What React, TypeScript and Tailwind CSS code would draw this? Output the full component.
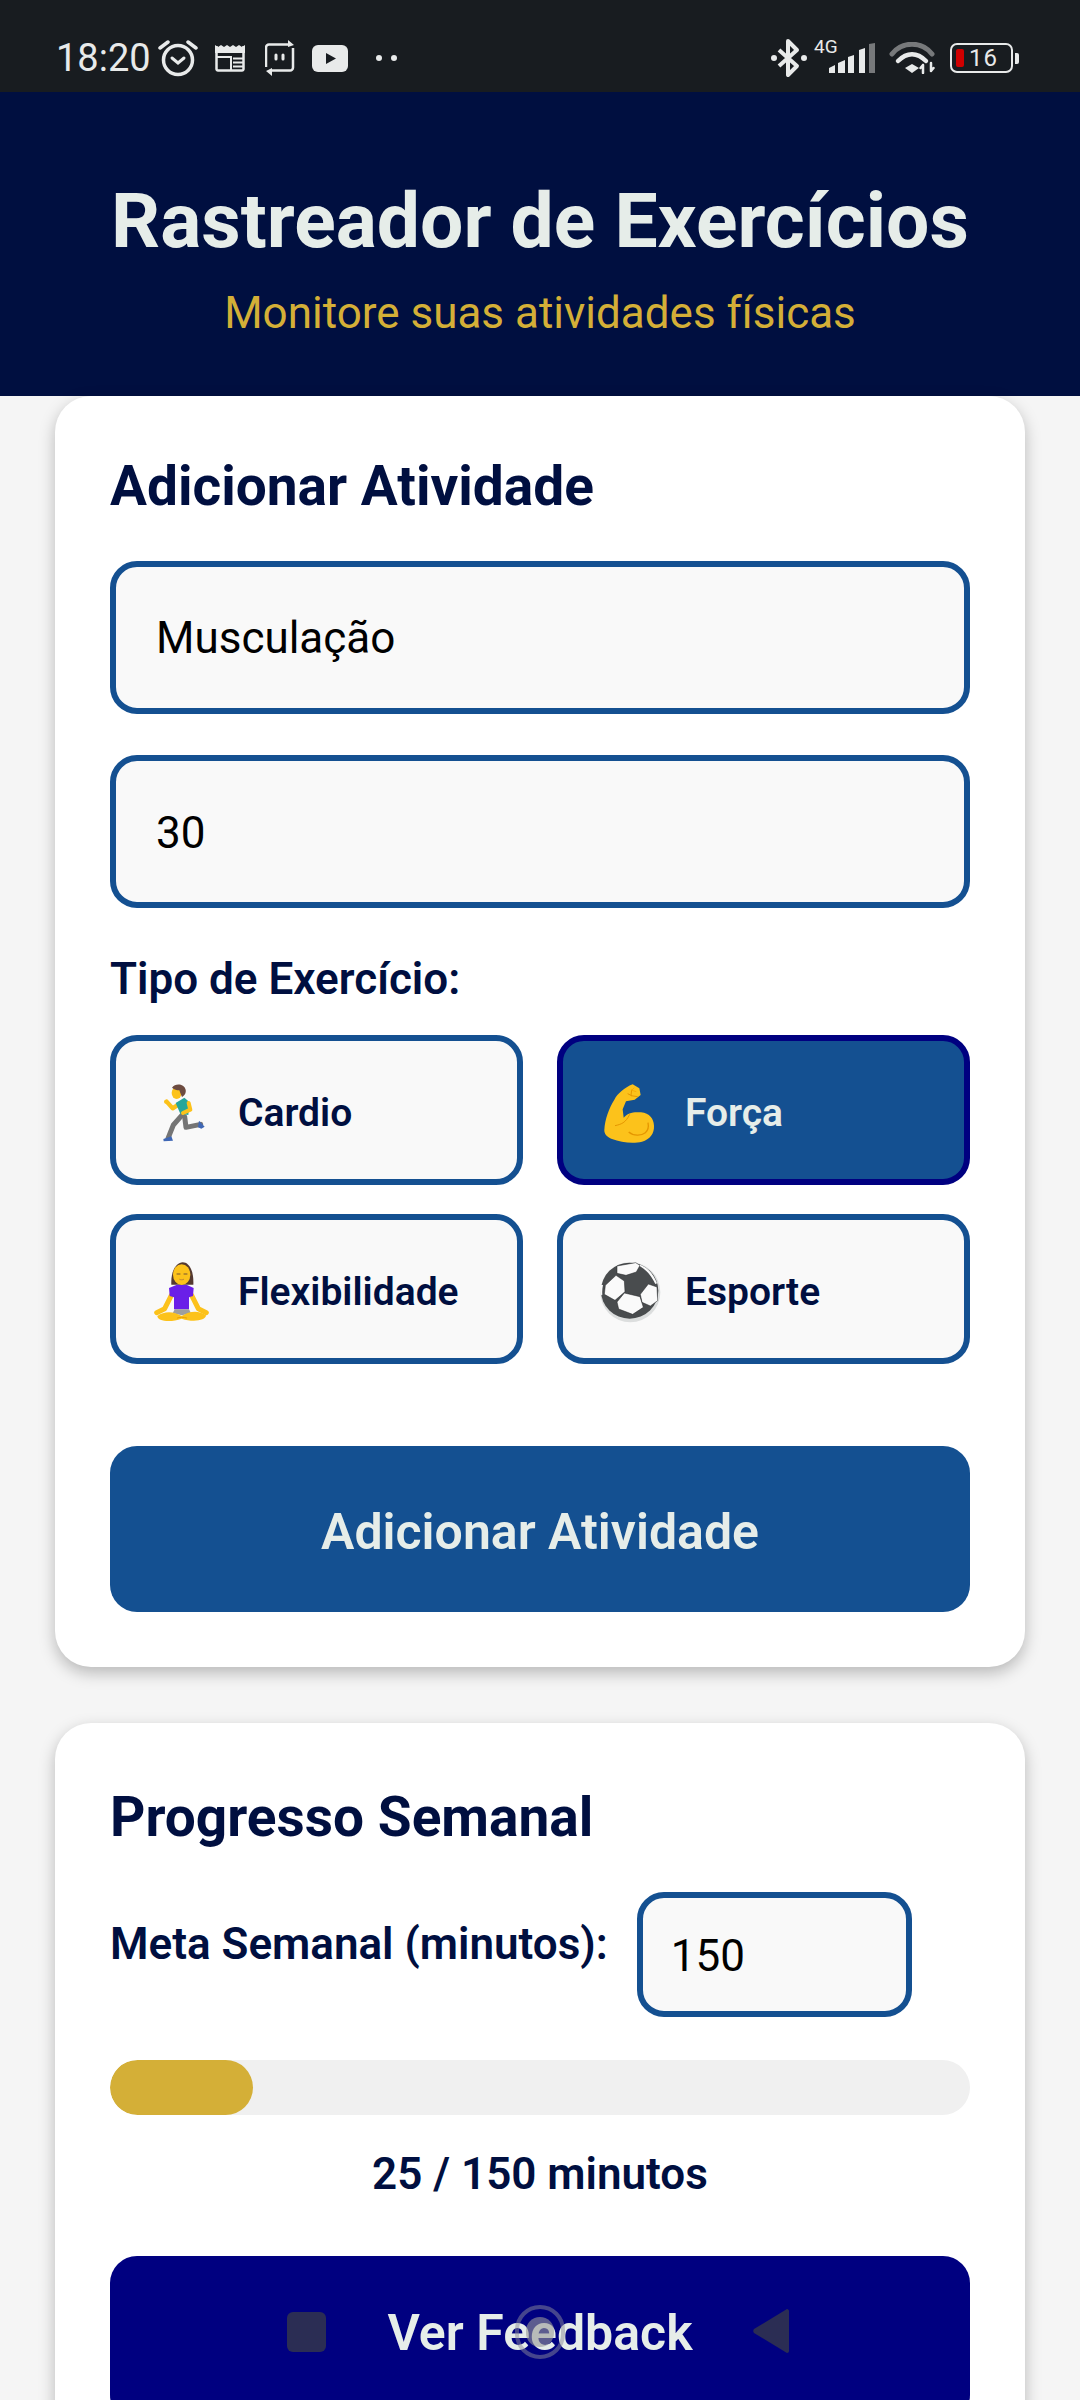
import React from 'react';

const FONT = 'font-["Roboto",sans-serif]';

const AlarmIcon = () => (
  <svg width="40" height="38" viewBox="0 0 40 38" fill="none" stroke="#e8eaea" strokeWidth="3.500">
    <circle cx="20" cy="21" r="14.500" />
    <path d="M14 19l6 5 6-5" strokeWidth="3" strokeLinecap="round" />
    <path d="M2 9l8-6M38 9l-8-6" strokeWidth="3.500" strokeLinecap="round" />
  </svg>
);

const NewsIcon = () => (
  <svg width="30" height="28" viewBox="0 0 30 28" fill="none" stroke="#e8eaea" strokeWidth="2.500">
    <path d="M1.500 2v23a1.500 1.500 0 0 0 1.500 1.500h24a1.500 1.500 0 0 0 1.500-1.500V2" />
    <path d="M0 1l3 2 3-2 3 2 3-2 3 2 3-2 3 2 3-2 3 2 3-2v8H0z" fill="#e8eaea" stroke="none" />
    <path d="M2 13h15M16 13v13" strokeWidth="2" />
    <path d="M18 14.500h10M18 18.500h10M18 22.500h10" strokeWidth="1.800" />
  </svg>
);

const BotIcon = () => (
  <svg width="30" height="38" viewBox="0 0 30 38" fill="none" stroke="#e8eaea" strokeWidth="2.500">
    <path d="M25 5.500H4a3 3 0 0 0-3 3V28" />
    <path d="M5 31.500h20a3 3 0 0 0 3-3V9" />
    <path d="M23 1l6 5-6 2zM7 29l-6 3 6 5z" fill="#e8eaea" stroke="none" />
    <path d="M11 16v4M18 16v4" strokeWidth="3" strokeLinecap="round" />
  </svg>
);

const YoutubeIcon = () => (
  <svg width="36" height="27" viewBox="0 0 36 27">
    <rect width="36" height="27" rx="6" fill="#e8eaea" />
    <path d="M14 8l10 5.500-10 5.500z" fill="#181c20" />
  </svg>
);

const BluetoothIcon = () => (
  <svg width="36" height="40" viewBox="0 0 36 40" fill="none" stroke="#e8eaea" strokeWidth="4" strokeLinejoin="round">
    <path d="M8 12l18 16-9 9V3l9 9L8 28" />
    <circle cx="3" cy="20" r="3" fill="#e8eaea" stroke="none" />
    <circle cx="33" cy="20" r="3" fill="#e8eaea" stroke="none" />
  </svg>
);

const SignalIcon = () => (
  <div className="relative w-[62px] h-[42px]">
    <span className="absolute left-0 top-[0px] text-[19px] leading-[20px] text-[#e8eaea]">4G</span>
    <svg className="absolute left-[14px] top-[6px]" width="48" height="30" viewBox="0 0 48 30">
      <path d="M1 30v-5l6-3v8zM10 30V20l7-3v13zM20 30V14l6-2v18zM31 30V7l6-2v25z" fill="#e8eaea" />
      <path d="M41 30V1l6-1v30z" fill="#77797b" />
    </svg>
  </div>
);

const WifiIcon = () => (
  <svg width="46" height="32" viewBox="0 0 46 32" fill="none" strokeLinecap="round">
    <path d="M3 12C13 -1 33 -1 43 12" stroke="#77797b" strokeWidth="5" />
    <path d="M9 19c9-9 19-9 28 0" stroke="#e8eaea" strokeWidth="4.500" />
    <path d="M16 26l7-4 7 4-7 5z" fill="#e8eaea" />
    <path d="M34 23v8M31.500 26l2.500-3M42 21v8M44.500 26l-2.500 3" stroke="#e8eaea" strokeWidth="2.500" />
  </svg>
);

const BatteryIcon = () => (
  <div className="flex items-center gap-[2px]">
    <div className="w-[63px] h-[30px] rounded-[7px] border-[2.5px] border-[#e8eaea] flex items-center pl-[4px] gap-[5px]">
      <span className="w-[8px] h-[18px] rounded-[2px] bg-[#d00000]" />
      <span className="text-[24px] leading-none text-[#e8eaea] tracking-[1px]">16</span>
    </div>
    <span className="w-[4px] h-[11px] rounded-r-[2px] bg-[#e8eaea]" />
  </div>
);

const RunnerEmoji = () => (
  <svg width="80" height="80" viewBox="0 0 240 240" fill="none" strokeLinecap="round" strokeLinejoin="round">
    <path d="M104 88L86 100 68 80" stroke="#fcc21b" strokeWidth="13" />
    <path d="M116 118L88 150 72 190" stroke="#757575" strokeWidth="15" />
    <path d="M122 125l4 32 44-9" stroke="#757575" strokeWidth="15" />
    <path d="M58 192l24-8 5 13-28 2zM165 137l17 18-10 6-10-4z" fill="#3f67b5" />
    <path d="M95 84l26-16 16 14-4 38-24-4z" fill="#26a69a" />
    <path d="M134 84l5 20-22 10" stroke="#fcc21b" strokeWidth="12" />
    <circle cx="66" cy="80" r="6" fill="#fcc21b" />
    <ellipse cx="98" cy="54" rx="15" ry="18" fill="#fcc21b" />
    <path d="M84 38c10-14 36-12 41 6 2 10-4 18-11 22l-5-12-3-8c-8 0-15-2-22-8z" fill="#6d4c41" />
  </svg>
);

const MuscleEmoji = () => (
  <svg width="80" height="80" viewBox="0 0 240 240" fill="none">
    <path d="M125 28l20 12 4 20-18 14-26 5-10 24 3 25c12-14 27-18 52-16 26 2 38 20 39 40 1 24-12 40-36 48-25 6-62 3-90-8-15-6-24-16-23-28 2-32 14-64 30-90 10-18 30-36 55-46z" fill="#fcc21b" />
    <path d="M113 171c16 14 40 10 50 2 10-8 10-20 8-30" stroke="#e59600" strokeWidth="4" />
    <path d="M72 152c18-4 32-8 44-34" stroke="#e59600" strokeWidth="3" />
    <path d="M122 44l-2 18 20 3M110 56l12 6" stroke="#e59600" strokeWidth="3" />
    <path d="M130 38l-8 8 14 4" stroke="#f7a800" strokeWidth="2.500" />
  </svg>
);

const YogaEmoji = () => (
  <svg width="80" height="80" viewBox="0 0 240 240" fill="none" strokeLinecap="round" strokeLinejoin="round">
    <path d="M82 98c-4-86 70-94 66 0z" fill="#543930" />
    <ellipse cx="113" cy="68" rx="26" ry="31" fill="#fcc21b" />
    <path d="M82 130l-20 40-24 12" stroke="#fcc21b" strokeWidth="15" />
    <path d="M143 130l20 40 24 12" stroke="#fcc21b" strokeWidth="15" />
    <path d="M75 108l22-9h32l20 9-2 24-12 4v36H90v-36l-13-4z" fill="#6a1fe8" />
    <path d="M92 172h43l6 12-27 6-28-6z" fill="#9e9e9e" />
    <path d="M40 192c22-16 50-14 73 0 24-16 52-18 73-2 0 16-40 22-73 10-36 14-74 6-73-8z" fill="#fcc21b" />
    <path d="M100 198c6-3 20-3 28 0" stroke="#e59600" strokeWidth="2.500" />
    <path d="M99 66l9 0M120 66l9 0" stroke="#5d4037" strokeWidth="2.500" />
    <path d="M107 82c4 2 8 2 12 0" stroke="#a56c43" strokeWidth="2" />
  </svg>
);

const BallEmoji = () => (
  <svg width="80" height="80" viewBox="0 0 240 240">
    <circle cx="118" cy="121" r="90" fill="#dcdede" />
    <ellipse cx="116" cy="116" rx="86" ry="84" fill="#494c4e" />
    <path d="M78 42l56-10 13 8-11 20-31 10-27-6zM43 100l32-30 25 17 2 32-30 26-32-18zM172 96l26 9 2 41-22 16-25-11-5-24zM100 123l47 11 10 32-32 21-42-16-5-21z" fill="#fafafa" stroke="#222426" strokeWidth="1.500" />
    <path d="M148 38c24 10 40 30 50 56l-5 2c-10-22-26-42-47-54zM30 98c-3 12-2 24 1 32l3-2c-1-10 0-20 2-29z" fill="#fafafa" />
  </svg>
);

const types = [
  { label: 'Cardio', icon: <RunnerEmoji />, active: false, offset: 'mt-[10px]' },
  { label: 'Força', icon: <MuscleEmoji />, active: true, offset: 'mt-[10px]' },
  { label: 'Flexibilidade', icon: <YogaEmoji />, active: false, offset: 'mt-[6px]' },
  { label: 'Esporte', icon: <BallEmoji />, active: false, offset: 'mt-[6px]' },
];

export default function App() {
  return (
    <div className={`${FONT} relative w-[1080px] h-[2400px] overflow-hidden bg-[#f5f5f5]`}>
      {/* status bar */}
      <div className="h-[92px] bg-[#181c20] flex items-center justify-between pt-[24px] pl-[56px] pr-[61px] text-[#e8eaea]">
        <div className="flex items-center">
          <span className="text-[38px] leading-none mr-[7px]">18:20</span>
          <AlarmIcon />
          <span className="ml-[17px] flex"><NewsIcon /></span>
          <span className="ml-[20px] flex"><BotIcon /></span>
          <span className="ml-[17px] flex"><YoutubeIcon /></span>
          <span className="ml-[28px] flex gap-[9px]">
            <span className="w-[6px] h-[6px] rounded-full bg-[#e8eaea]" />
            <span className="w-[6px] h-[6px] rounded-full bg-[#e8eaea]" />
          </span>
        </div>
        <div className="flex items-center">
          <BluetoothIcon />
          <span className="ml-[7px] flex"><SignalIcon /></span>
          <span className="ml-[13px] flex"><WifiIcon /></span>
          <span className="ml-[15px] flex"><BatteryIcon /></span>
        </div>
      </div>

      {/* header */}
      <div className="h-[304px] bg-[#000f40] flex flex-col items-center pt-[84px]">
        <h1 className="text-[76.8px] leading-[90px] font-bold text-[#e6ede9]">Rastreador de Exercícios</h1>
        <p className="text-[44px] leading-[52px] text-[#d4af37] mt-[21px]">Monitore suas atividades físicas</p>
      </div>

      {/* add activity */}
      <div className="mx-[55px] bg-white rounded-[36px] shadow-[0_6px_16px_rgba(0,0,0,0.25)] px-[55px] pt-[58px] pb-[55px]">
        <h2 className="text-[55px] leading-[64px] font-bold text-[#000f40]">Adicionar Atividade</h2>
        <div className="mt-[43px] h-[153px] rounded-[27px] border-[6px] border-[#145091] bg-[#f9f9f9] flex items-center pl-[40px] text-[44px] text-black">Musculação</div>
        <div className="mt-[41px] h-[153px] rounded-[27px] border-[6px] border-[#145091] bg-[#f9f9f9] flex items-center pl-[40px] pt-[3px] text-[44px] text-black">30</div>
        <p className="mt-[46px] text-[44px] leading-[50px] font-semibold text-[#000f40]">Tipo de Exercício:</p>
        <div className="mt-[31px] grid grid-cols-2 gap-x-[34px] gap-y-[29px]">
          {types.map(t => (
            <div
              key={t.label}
              className={`h-[150px] rounded-[27px] border-[6px] flex items-center ${t.active ? 'bg-[#145091] border-[#000080] text-[#e6ede9]' : 'bg-[#f9f9f9] border-[#145091] text-[#000f40]'}`}
            >
              <span className={`${t.offset} w-[122px] pl-[28px] flex`}>{t.icon}</span>
              <span className="mt-[6px] text-[39px] font-semibold">{t.label}</span>
            </div>
          ))}
        </div>
        <div className="mt-[82px] h-[166px] rounded-[27px] bg-[#145091] flex items-center justify-center pt-[6px] text-[50px] font-semibold text-[#e6ede9]">Adicionar Atividade</div>
      </div>

      {/* weekly progress */}
      <div className="mt-[56px] mx-[55px] bg-white rounded-[36px] shadow-[0_6px_16px_rgba(0,0,0,0.25)] px-[55px] pt-[62px] pb-[55px]">
        <h2 className="text-[55px] leading-[64px] font-bold text-[#000f40]">Progresso Semanal</h2>
        <div className="mt-[43px] flex items-start">
          <span className="mt-[27px] text-[44px] leading-[50px] font-semibold text-[#000f40]">Meta Semanal (minutos):</span>
          <div className="ml-[29px] w-[275px] h-[125px] rounded-[27px] border-[6px] border-[#145091] bg-[#f9f9f9] flex items-center pl-[28px] pt-[3px] text-[44px] text-black">150</div>
        </div>
        <div className="mt-[43px] h-[55px] rounded-full bg-[#f0f0f0] overflow-hidden">
          <div className="h-full rounded-full bg-[#d4af37]" style={{ width: `${(25 / 150) * 100}%` }} />
        </div>
        <p className="mt-[34px] text-center text-[44px] leading-[50px] font-semibold text-[#000f40]">25 / 150 minutos</p>
        <div className="mt-[57px] h-[166px] rounded-[27px] bg-[#000080] flex items-center justify-center pb-[12px] text-[50px] font-semibold text-[#e6ede9]">Ver Feedback</div>
      </div>

      {/* navigation keys */}
      <div className="absolute left-[287px] top-[2312px] w-[39px] h-[40px] rounded-[6px] bg-[#2b2d54]" />
      <div className="absolute left-[515px] top-[2305px] w-[50px] h-[54px] rounded-full border-[4px] border-[#8a8a99]/50 flex items-center justify-center">
        <span className="w-[28px] h-[30px] rounded-full bg-[#9a9a9a]/60" />
      </div>
      <svg className="absolute left-[752px] top-[2308px]" width="38" height="46" viewBox="0 0 38 46">
        <path d="M35 1L2 21c-1 1-1 3 0 4l33 20c1 0 2-1 2-2V3c0-1-1-2-2-2z" fill="#2b2d54" />
      </svg>
    </div>
  );
}
